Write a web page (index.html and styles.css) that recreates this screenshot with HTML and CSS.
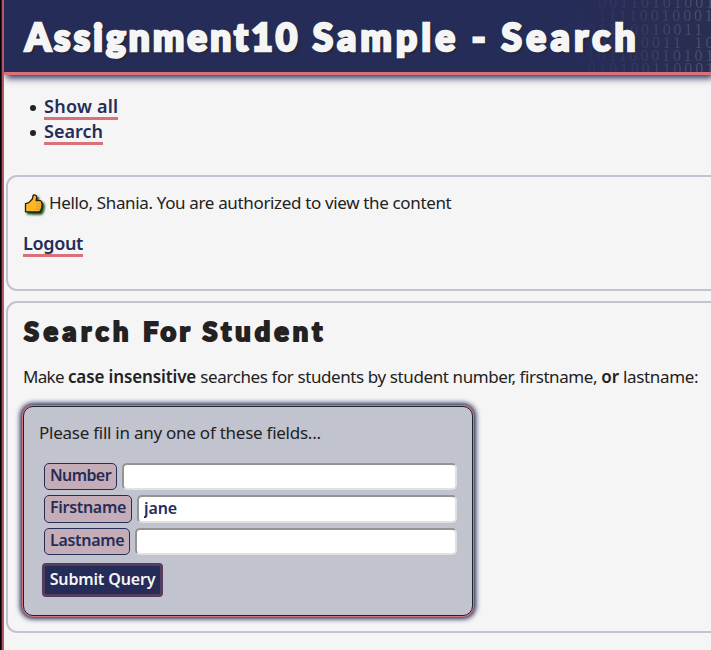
FILE: index.html
```html
<!DOCTYPE html>
<html lang="en">
<head>
<meta charset="utf-8">
<title>Assignment10 Sample - Search</title>
<link rel="stylesheet" href="styles.css">
</head>
<body>
<div class="page">
  <header class="banner">
    <pre class="digits" aria-hidden="true">    00110101001
000 11110010001
 00011 0010011 
 00000110011 10
110101100010101
   010100110001</pre>
    <h1><span class="w1">Assignment10</span> <span class="w2">Sample</span> - <span class="w3">Search</span></h1>
  </header>
  <ul class="menu">
    <li><a class="wide" href="#">Show all</a></li>
    <li><a href="#">Search</a></li>
  </ul>
  <section class="card user">
    <p class="hello"><svg class="thumb" viewBox="0 0 20 20" width="20" height="20"><path d="M1.5 9.6 L4.8 8.6 L8.3 5 L9.2 1.2 Q12.2 .4 12.7 3 L12.2 6.6 H16.2 Q17.9 6.9 17.6 8.8 Q18.6 10.2 17.8 11.8 Q18.2 13.4 17.2 14.8 Q16.8 17.6 15 18 H7 L5 17.8 H1.5Z" fill="#fcb72b" stroke="#2b1c10" stroke-width="1.3" stroke-linejoin="round"/><path d="M12 9.9H17M12 12.6H17M12 15.2H16.3" stroke="#d98a1e" stroke-width=".8"/></svg><span>Hello, Shania. You are authorized to view the content</span></p>
    <p class="logout"><a href="#">Logout</a></p>
  </section>
  <section class="card search">
    <h2><span class="s1">Search</span> For <span class="s3">Student</span></h2>
    <p class="intro"><span class="make">Make</span> <b>case insensitive</b> <span class="mid">searches for students by student number, firstname,</span> <b>or</b> <span>lastname:</span></p>
    <form class="form">
      <p class="hint">Please fill in any one of these fields...</p>
      <div class="row"><label class="num" for="n">Number</label><input id="n" type="text"></div>
      <div class="row tall"><label for="f">Firstname</label><input id="f" type="text" value="jane"></div>
      <div class="row"><label for="l">Lastname</label><input id="l" type="text"></div>
      <button type="button">Submit Query</button>
    </form>
  </section>
</div>
</body>
</html>
```
FILE: styles.css
```css
* { box-sizing: border-box; }
html { height: 100%; overflow: hidden; background: #000; }
body {
  margin: 0;
  height: 100%;
  overflow: hidden;
  padding-left: 4px;
  background: linear-gradient(90deg, #000 0 1px, #3a1e24 1px 2px, #a95362 2px 3px, #b75c69 3px 4px);
  font: 17px/25px "Noto Sans", sans-serif;
  letter-spacing: -.35px;
  color: #222;
}
h1, h2, p, ul { margin: 0; }
.page { height: 650px; overflow: hidden; background: #f5f5f5; }
.banner {
  position: relative;
  height: 75px;
  padding: 0 21px;
  background: linear-gradient(90deg, #252c58 0 560px, #2a2e50 707px);
  border-bottom: 3px solid #d9707a;
  box-shadow: 2px 3px 7px 0 #252c58;
  white-space: nowrap;
}
.digits {
  position: absolute;
  left: 551px;
  top: -4px;
  width: 156px;
  height: 76px;
  margin: 0;
  overflow: hidden;
  font: 16px/13.3px "Liberation Serif", serif;
  letter-spacing: 2.83px;
  word-spacing: 4px;
  color: #6f7491;
  -webkit-mask-image: linear-gradient(90deg, transparent, rgba(0,0,0,.18) 50%, rgba(0,0,0,.5));
}
h1, h2 { font-family: Lato, sans-serif; font-weight: 900; white-space: nowrap; }
h1 {
  position: relative;
  font-size: 37px;
  line-height: 73px;
  letter-spacing: 3.6px;
  color: #f5f5f5;
  -webkit-text-stroke: 2.6px #f5f5f5;
  text-shadow: 2px 2px 2px #222;
}
.w1 { letter-spacing: 3.15px; }
.w2 { letter-spacing: 4.3px; }
.w3 { letter-spacing: 4.5px; }
.menu { padding: 20px 0 0; margin-left: 40px; height: 100px; list-style: none; }
.menu li { display: flex; height: 25px; }
.menu li::before {
  content: "";
  width: 6px;
  height: 6px;
  margin: 10px 8px 0 -14px;
  border-radius: 50%;
  background: #222;
}
a {
  display: inline-block;
  height: 25px;
  font-size: 18px;
  line-height: 22px;
  font-weight: 600;
  color: #252c58;
  text-decoration: none;
  border-bottom: 3px solid #d9707a;
  vertical-align: top;
}
.menu a { letter-spacing: 0; }
.menu .wide { letter-spacing: .25px; }
.card {
  width: 760px;
  margin-left: 2px;
  padding: 0 15px;
  border: 2px solid #c1c3d0;
  border-radius: 11px;
}
.user { height: 116px; padding-top: 13px; }
.hello { display: flex; }
.thumb { margin: 4px 5px 0 1px; filter: drop-shadow(2px 2px 1px #064d13); }
.logout { padding-top: 17px; }
.search { height: 332px; margin-top: 10px; }
h2 {
  padding: 12px 0 0 1px;
  font-size: 27px;
  line-height: 32px;
  letter-spacing: 3.5px;
  -webkit-text-stroke: 2px #222;
  text-shadow: 1px 1px 0 #d9707a;
}
.s1 { letter-spacing: 4.6px; }
.s3 { letter-spacing: 4.1px; }
.intro { margin-top: 17px; white-space: nowrap; }
.intro b { font-weight: 600; letter-spacing: -.12px; }
.make { letter-spacing: -.7px; }
.mid { letter-spacing: -.4px; }
.form {
  width: 450px;
  height: 210px;
  margin-top: 17px;
  padding: 13px 15px 0;
  background: #c1c3ce;
  border: 1px solid #222;
  border-radius: 10px;
  box-shadow: 0 0 0 1px #d9707a, 0 0 5px 3px #252c58;
}
.hint { height: 43px; letter-spacing: -.25px; }
.row { display: flex; gap: 5px; height: 27px; margin: 0 0 5px 5px; }
.tall { height: 28px; }
label {
  padding: 0 5px;
  font-size: 16px;
  line-height: 22px;
  letter-spacing: -.3px;
  font-weight: 600;
  color: #252c58;
  background: #c5adb8;
  border: 1px solid #252c58;
  border-radius: 5px;
}
.num { letter-spacing: -.6px; }
input {
  flex: 1;
  min-width: 0;
  padding: 0 5px 2px;
  font: 600 16px "Noto Sans", sans-serif;
  letter-spacing: -.1px;
  color: #252c58;
  background: #fff;
  border: 2px solid;
  border-color: #949494 #e1e1e1 #e1e1e1 #949494;
  border-radius: 5px;
}
button {
  display: block;
  width: 121px;
  height: 34px;
  margin: 8px 0 0 3px;
  padding: 0 0 2px;
  font: 600 16px "Noto Sans", sans-serif;
  letter-spacing: -.15px;
  color: #f5f5f5;
  background: #252c58;
  border: 3px solid #543e60;
  border-radius: 4px;
}
```
